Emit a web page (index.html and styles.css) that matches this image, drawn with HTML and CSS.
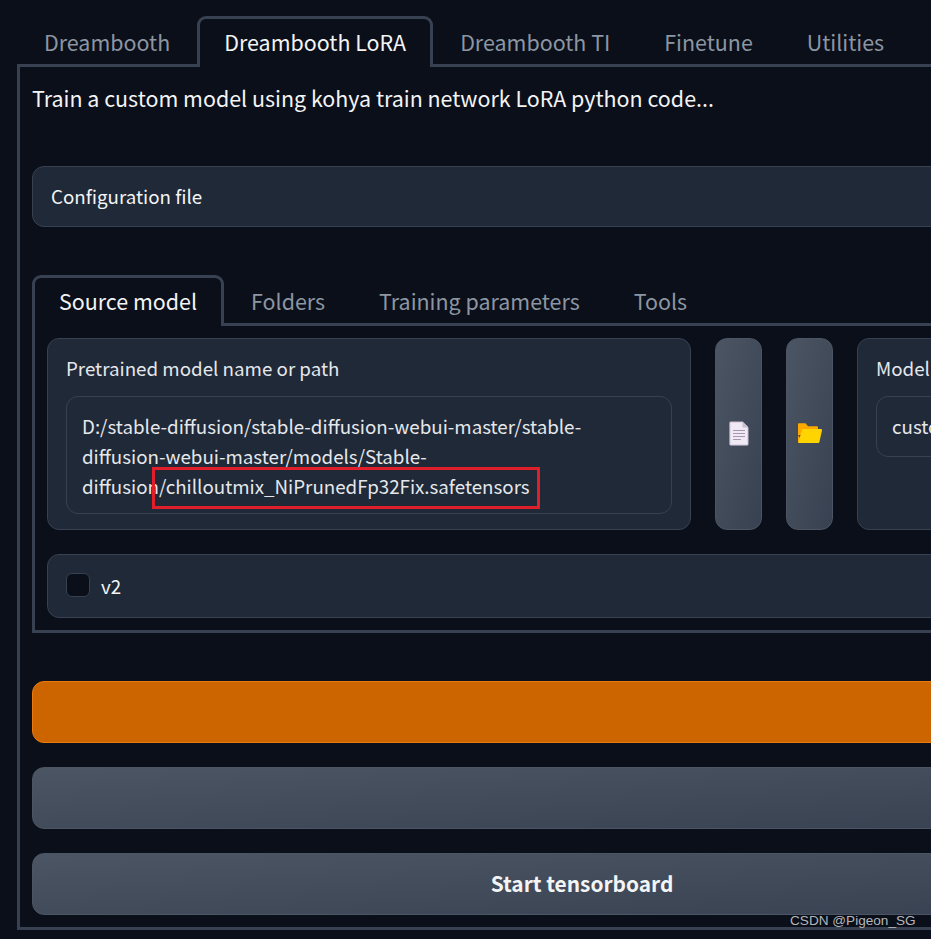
FILE: index.html
```html
<!DOCTYPE html>
<html lang="en">
<head>
<meta charset="utf-8">
<title>Dreambooth LoRA</title>
<link rel="stylesheet" href="styles.css">
</head>
<body>
<main class="app">
  <nav class="tabs main-tabs">
    <button class="tab">Dreambooth</button>
    <button class="tab active">Dreambooth LoRA</button>
    <button class="tab">Dreambooth TI</button>
    <button class="tab">Finetune</button>
    <button class="tab">Utilities</button>
  </nav>
  <section class="panel main-panel">
    <p class="intro">Train a custom model using kohya train network LoRA python code...</p>
    <div class="accordion">Configuration file</div>
    <nav class="tabs sub-tabs">
      <button class="tab active">Source model</button>
      <button class="tab">Folders</button>
      <button class="tab">Training parameters</button>
      <button class="tab">Tools</button>
    </nav>
    <section class="panel sub-panel">
      <div class="model-row">
        <div class="card path-card">
          <div class="label">Pretrained model name or path</div>
          <div class="field path-field">D:/stable-diffusion/stable-diffusion-webui-master/stable-diffusion-webui-master/models/Stable-diffusion/chilloutmix_NiPrunedFp32Fix.safetensors<span class="highlight"></span></div>
        </div>
        <button class="tool-btn" aria-label="Choose file">
          <svg width="20" height="25" viewBox="0 0 20 25"><path d="M1.5 1h12.2L19 6.3v17.2a.6.6 0 0 1-.6.6H1.500a.6.6 0 0 1-.6-.6V1.600A.6.6 0 0 1 1.500 1z" fill="#f0eaf4" stroke="#c9bfd3" stroke-width="1"/><path d="M13.500 1v5.500H19z" fill="#c9bfd3"/><path d="M4 9.500h12M4 12.500h12M4 15.500h12M4 18.500h8" stroke="#a795b3" stroke-width="1.200"/></svg>
        </button>
        <button class="tool-btn" aria-label="Choose folder">
          <svg width="24" height="20" viewBox="0 0 24 20"><path d="M0 1.200A1 1 0 0 1 1 .2h6.500l2.500 3h9a1 1 0 0 1 1 1V12H0z" fill="#ffa900"/><path d="M0 12V19a1 1 0 0 0 1 1h4z" fill="#ffa900"/><path d="M5.200 6h17.800a1 1 0 0 1 1 1.200l-2.600 11.800a1.200 1.200 0 0 1-1.200 1H1.500a1 1 0 0 1-1-1.200L4 7a1.200 1.200 0 0 1 1.200-1z" fill="#ffd400"/></svg>
        </button>
        <div class="card quick-card">
          <div class="label">Model Quick Pick</div>
          <div class="field quick-field">custom</div>
        </div>
      </div>
      <label class="card check-row"><span class="checkbox"></span><span>v2</span></label>
    </section>
    <button class="action primary"></button>
    <button class="action"></button>
    <button class="action">Start tensorboard</button>
  </section>
</main>
<div class="watermark">CSDN @Pigeon_SG</div>
</body>
</html>
```
FILE: styles.css
```css
* { box-sizing: border-box; }
html, body { margin: 0; height: 939px; overflow: hidden; }
body {
  background: #0b0f19;
  color: #f3f4f6;
  font-family: "Noto Sans CJK SC", "Noto Sans", sans-serif;
  position: relative;
}
button { font-family: inherit; color: inherit; }
.app { width: 1130px; margin-left: 17px; padding-top: 16px; }
.tabs { display: flex; position: relative; z-index: 1; margin-bottom: -3px; }
.tab {
  height: 51px;
  padding: 0 24px 4px;
  border: 3px solid transparent;
  border-bottom: 0;
  border-radius: 9px 9px 0 0;
  background: transparent;
  color: #8c96a3;
  font-size: 21.450px;
  white-space: nowrap;
}
.tab.active { background: #0b0f19; color: #f3f4f6; border-color: #374151; }
.panel { border: 3px solid #374151; }
.main-panel { padding: 12px 12px 0; height: 866px; }
.intro { margin: 0 0 46px; height: 41px; font-size: 21.450px; line-height: 37px; }
.accordion {
  height: 61px;
  padding: 0 0 2px 18px;
  display: flex;
  align-items: center;
  background: #1f2937;
  border: 1px solid #374151;
  border-radius: 12px;
  font-size: 18.750px;
  margin-bottom: 48px;
}
.sub-panel { padding: 12px; }
.model-row { display: flex; gap: 24px; height: 192px; }
.card { background: #1f2937; border: 1px solid #374151; border-radius: 12px; }
.path-card { width: 644px; padding: 15px 18px 0; }
.quick-card { width: 240px; padding: 15px 18px 0; }
.label { font-size: 18.750px; line-height: 28px; color: #e5e7eb; margin-bottom: 14px; }
.field { border: 1px solid #374151; border-radius: 12px; font-size: 18.750px; line-height: 30px; color: #e5e7eb; }
.path-field { position: relative; height: 118px; padding: 14px 15px 0; }
.quick-field { height: 61px; padding: 14px 15px 0; }
.highlight {
  position: absolute;
  left: 85px;
  top: 70px;
  width: 388px;
  height: 42px;
  border: 3px solid #e01f2b;
}
.tool-btn {
  width: 47px;
  padding: 0 0 2px;
  display: flex;
  align-items: center;
  justify-content: center;
  border: 1px solid #4b5563;
  border-radius: 12px;
  background: linear-gradient(to bottom right, #4b5563, #374151);
}
.check-row {
  display: flex;
  align-items: center;
  gap: 11px;
  height: 64px;
  margin-top: 24px;
  padding: 0 0 2px 18px;
  font-size: 18.750px;
}
.checkbox { width: 24px; height: 24px; background: #0b0f19; border: 1px solid #374151; border-radius: 6px; }
.action {
  display: block;
  width: 1100px;
  height: 62px;
  margin-top: 24px;
  padding-bottom: 4px;
  border: 1px solid #4b5563;
  border-radius: 12px;
  background: linear-gradient(to bottom right, #4b5563, #374151);
  font-size: 20.850px;
  font-weight: 700;
}
.primary { margin-top: 48px; background: #cc6400; border-color: #ea7a0c; }
.watermark {
  position: absolute;
  left: 790px;
  top: 912px;
  font-family: "Liberation Sans", sans-serif;
  font-size: 13.600px;
  line-height: 18px;
  color: #b4b6ba;
}
```
